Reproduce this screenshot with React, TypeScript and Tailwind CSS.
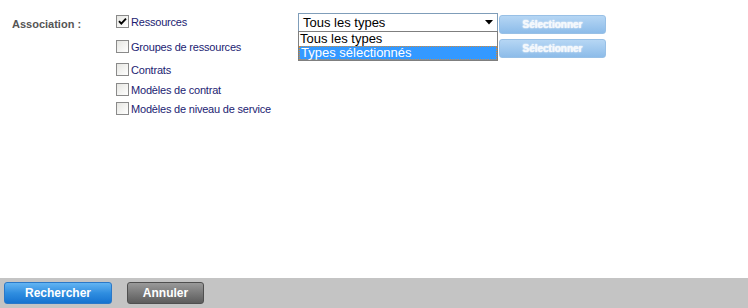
import React from 'react';

const FONT = '"Liberation Sans", Tahoma, Arial, sans-serif';

function Checkbox({ checked = false }: { checked?: boolean }) {
  return (
    <span className="flex h-[13px] w-[13px] shrink-0 items-center justify-center border border-[#8a8a8a] bg-gradient-to-br from-[#e6e6e2] to-[#ffffff]">
      {checked && (
        <svg width="9" height="9" viewBox="0 0 9 9" aria-hidden>
          <path d="M1 4.2 L3.3 6.6 L8 1.6" fill="none" stroke="#000" strokeWidth="1.9" />
        </svg>
      )}
    </span>
  );
}

function SelectButton() {
  return (
    <button
      type="button"
      disabled
      className="h-[19px] w-[107px] rounded-[3px] border border-[#98c0e6] bg-gradient-to-b from-[#b6d6f4] to-[#8cbce9] text-[10px] font-bold text-[#f4f8fc] [text-shadow:0_0_2px_#ffffff,0_0_1px_#ffffff]"
    >
      Sélectionner
    </button>
  );
}

function Row({
  height,
  label,
  checked,
  children,
}: {
  height: string;
  label: string;
  checked?: boolean;
  children?: React.ReactNode;
}) {
  return (
    <div className={`flex items-start ${height}`}>
      <div className="flex h-[20px] w-[182px] items-center gap-[2px]">
        <Checkbox checked={checked} />
        <span className="pt-[2px] text-[11px] tracking-[-0.2px] text-[#1c1c72]">{label}</span>
      </div>
      {children}
    </div>
  );
}

export default function App() {
  return (
    <div className="flex h-[308px] w-[748px] flex-col bg-white" style={{ fontFamily: FONT }}>
      <div className="flex flex-1 pt-[11px]">
        <div className="w-[116px] pl-[12px] pt-[5px] text-[11px] font-bold text-[#555555]">Association :</div>
        <div className="flex flex-col">
          <Row height="h-[25px]" label="Ressources" checked>
            <div className="relative mt-[2px] w-[200px]">
              <div className="flex h-[19px] items-center justify-between border border-[#7f9db9] bg-white pl-[4px] pr-[4px] text-[13px] text-black">
                <span>Tous les types</span>
                <svg width="8" height="5" viewBox="0 0 8 5" aria-hidden>
                  <path d="M0 0 H8 L4 4.5 Z" fill="#000" />
                </svg>
              </div>
              <div className="absolute left-0 top-[18px] z-10 w-[200px] border border-[#7f7f7f] bg-white text-[13px] leading-[14px]">
                <div className="px-[1px] text-black">Tous les types</div>
                <div className="border border-dotted border-[#d28a3a] bg-[#3399ff] px-[1px] leading-[12px] text-white">Types sélectionnés</div>
              </div>
            </div>
            <div className="ml-[1px]">
              <SelectButton />
            </div>
          </Row>
          <Row height="h-[23px]" label="Groupes de ressources">
            <div className="ml-[201px] -mt-[1px]">
              <SelectButton />
            </div>
          </Row>
          <Row height="h-[20px]" label="Contrats" />
          <Row height="h-[19px]" label="Modèles de contrat" />
          <Row height="h-[20px]" label="Modèles de niveau de service" />
        </div>
      </div>
      <div className="flex h-[30px] items-center gap-[15px] bg-[#c4c4c4] pl-[4px]">
        <button
          type="button"
          className="h-[22px] w-[108px] rounded-[3px] border border-[#2a78c8] bg-gradient-to-b from-[#62b4f2] via-[#2f8ee0] to-[#1573d0] text-[12px] font-bold text-white"
        >
          Rechercher
        </button>
        <button
          type="button"
          className="h-[22px] w-[77px] rounded-[3px] border border-[#4f4f4f] bg-gradient-to-b from-[#9a9a9a] via-[#7a7a7a] to-[#5c5c5c] text-[12px] font-bold text-white"
        >
          Annuler
        </button>
      </div>
    </div>
  );
}
